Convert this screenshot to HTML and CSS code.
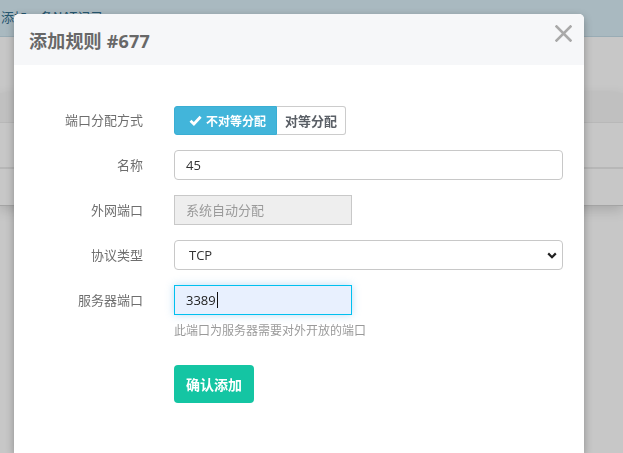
FILE: index.html
```html
<!DOCTYPE html>
<html lang="zh-CN">
<head>
<meta charset="utf-8">
<title>添加规则 #677</title>
<link rel="stylesheet" href="styles.css">
</head>
<body>
<div class="page">
  <div class="alert">添加一条NAT记录</div>
  <div class="toolbar"></div>
  <div class="table">
    <div class="thead"></div>
    <div class="trow"></div>
    <div class="trow last"></div>
  </div>
</div>

<div class="backdrop"></div>

<div class="modal">
  <div class="modal-header">
    <h4 class="modal-title">添加规则 #677</h4>
    <button class="close" type="button" aria-label="关闭">
      <svg width="17" height="17" viewBox="0 0 17 17"><path d="M1.5 1.5 L15.5 15.5 M15.5 1.5 L1.5 15.5" stroke="#a9a9a9" stroke-width="2.6" stroke-linecap="square" fill="none"/></svg>
    </button>
  </div>
  <form class="modal-body">
    <label class="form-label">端口分配方式</label>
    <div class="btn-group">
      <button type="button" class="seg active">
        <svg width="13" height="11" viewBox="0 0 13 11"><path d="M1.5 5.8 L4.9 9 L11.6 1.8" stroke="#fff" stroke-width="2.8" fill="none" stroke-linejoin="miter"/></svg>
        不对等分配
      </button>
      <button type="button" class="seg">对等分配</button>
    </div>

    <label class="form-label">名称</label>
    <input class="form-control" type="text" value="45">

    <label class="form-label">外网端口</label>
    <input class="form-control short" type="text" placeholder="系统自动分配" disabled>

    <label class="form-label">协议类型</label>
    <div class="select-wrap">
      <select class="form-control select">
        <option>TCP</option>
        <option>UDP</option>
      </select>
      <svg class="chevron" width="10" height="7" viewBox="0 0 10 7"><path d="M1.2 1.4 L5 5.2 L8.8 1.4" stroke="#222" stroke-width="2.2" fill="none"/></svg>
    </div>

    <label class="form-label">服务器端口</label>
    <div class="field">
      <div class="form-control short focused">3389<span class="caret"></span></div>
      <p class="help">此端口为服务器需要对外开放的端口</p>
    </div>

    <div></div>
    <div class="actions">
      <button type="button" class="btn-submit">确认添加</button>
    </div>
  </form>
</div>
</body>
</html>
```

FILE: styles.css
```css
* {
  box-sizing: border-box;
}

html, body {
  margin: 0;
  height: 100%;
  overflow: hidden;
}

body {
  background: #fff;
  font-family: "Open Sans", "Noto Sans CJK SC", sans-serif;
  font-size: 13px;
  color: #555;
}

/* page underneath the dialog */
.page {
  display: flex;
  flex-direction: column;
}

.alert {
  height: 37px;
  line-height: 34px;
  padding-left: 1px;
  background: #d9edf7;
  border-bottom: 1px solid #c4dde8;
  color: #31708f;
  font-family: "Noto Sans CJK SC", sans-serif;
  font-size: 13px;
}

.toolbar {
  height: 56px;
}

.table {
  display: flex;
  flex-direction: column;
  box-shadow: 0 4px 12px rgba(0, 0, 0, 0.16);
}

.thead {
  height: 30px;
  background: #f6f6f6;
  border-bottom: 1px solid #ececec;
}

.trow {
  height: 46px;
  border-bottom: 2px solid #ebebeb;
}

.trow.last {
  height: 37px;
  border-bottom: 1px solid #d2d2d2;
}

.backdrop {
  position: fixed;
  inset: 0;
  background: rgba(0, 0, 0, 0.22);
}

/* dialog, running off the bottom of the window */
.modal {
  position: absolute;
  left: 14px;
  top: 14px;
  bottom: 0;
  width: 570px;
  background: #fff;
  border-radius: 5px 5px 0 0;
  box-shadow: 0 3px 9px rgba(0, 0, 0, 0.3);
  overflow: hidden;
}

.modal-header {
  position: relative;
  height: 51px;
  background: #f6f7f9;
  display: flex;
  align-items: center;
  padding-left: 15px;
}

.modal-title {
  margin: 0;
  font-family: "Open Sans", "Noto Sans CJK SC", sans-serif;
  font-size: 18px;
  font-weight: 700;
  color: #686868;
  letter-spacing: 0.2px;
}

.close {
  position: absolute;
  right: 11px;
  top: 10px;
  width: 19px;
  height: 19px;
  padding: 1px;
  border: 0;
  background: none;
  display: flex;
}

.modal-body {
  margin: 0;
  padding: 40px 21px 0 0;
  display: grid;
  grid-template-columns: 129px 1fr;
  column-gap: 31px;
  row-gap: 15px;
  align-items: start;
}

.form-label {
  height: 30px;
  line-height: 30px;
  text-align: right;
  font-family: "Noto Sans CJK SC", sans-serif;
  font-size: 13px;
  color: #6e6e6e;
}

.btn-group {
  display: flex;
  height: 29px;
  margin-top: 1px;
}

.seg {
  height: 29px;
  border: 1px solid #ccc;
  border-left: 0;
  border-radius: 0 3px 3px 0;
  background: #fff;
  color: #5a5f66;
  font-family: "Noto Sans CJK SC", sans-serif;
  font-size: 13px;
  font-weight: 700;
  display: flex;
  align-items: center;
  justify-content: center;
  gap: 4px;
  width: 69px;
  padding: 0;
}

.seg.active {
  width: 103px;
  background: #42b5da;
  border: 1px solid #3aaed3;
  color: #fff;
  border-radius: 3px 0 0 3px;
  font-size: 12px;
  padding: 0 0 0 4px;
}

.form-control {
  display: block;
  width: 100%;
  height: 30px;
  padding: 0 11px;
  border: 1px solid #c8c8c8;
  border-radius: 4px;
  background: #fff;
  font-family: "Open Sans", "Noto Sans CJK SC", sans-serif;
  font-size: 13px;
  color: #333;
  outline: none;
}

.form-control.short {
  width: 178px;
}

.form-control:disabled {
  background: #eee;
  border-color: #c8c8c8;
  border-radius: 0;
}

.form-control::placeholder {
  color: #9a9a9a;
  font-family: "Noto Sans CJK SC", sans-serif;
}

.select-wrap {
  position: relative;
}

.select {
  appearance: none;
  -webkit-appearance: none;
  padding-left: 14px;
  color: #333;
}

.chevron {
  position: absolute;
  right: 6px;
  top: 12px;
  pointer-events: none;
}

.field {
  display: flex;
  flex-direction: column;
}

.focused {
  display: flex;
  align-items: center;
  border-radius: 0;
  border-color: #00c0ef;
  background: #e8f0fe;
  color: #222;
  box-shadow: 0 0 8px rgba(102, 175, 233, 0.45);
}

.caret {
  width: 1px;
  height: 16px;
  margin-left: 1px;
  background: #111;
}

.help {
  margin: 7px 0 0;
  font-family: "Noto Sans CJK SC", sans-serif;
  font-size: 12px;
  line-height: 16px;
  color: #9a9a9a;
}

.actions {
  padding-top: 12px;
}

.btn-submit {
  width: 80px;
  height: 38px;
  border: 0;
  border-radius: 4px;
  background: #14c5a3;
  color: #fff;
  font-family: "Noto Sans CJK SC", sans-serif;
  font-size: 14px;
  font-weight: 700;
}
```
